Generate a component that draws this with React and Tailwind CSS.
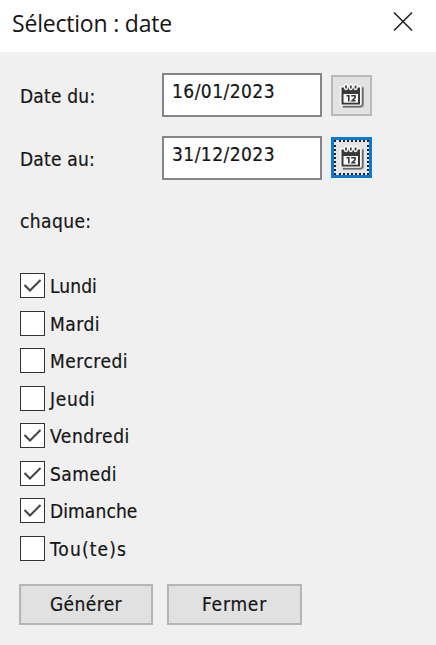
import React from "react";

const days = [
  { label: "Lundi", checked: true, tracking: "tracking-[0.1px]" },
  { label: "Mardi", checked: false, tracking: "tracking-[0.5px]" },
  { label: "Mercredi", checked: false, tracking: "tracking-[0.5px]" },
  { label: "Jeudi", checked: false, tracking: "tracking-[0.7px]" },
  { label: "Vendredi", checked: true, tracking: "tracking-[0.6px]" },
  { label: "Samedi", checked: true, tracking: "tracking-[0.5px]" },
  { label: "Dimanche", checked: true, tracking: "tracking-[0.1px]" },
  { label: "Tou(te)s", checked: false, tracking: "tracking-[1.15px]" },
];

function CalendarIcon() {
  return (
    <svg width="26" height="26" viewBox="0 0 26 26" fill="none">
      <path d="M22 3.5h3V24.500H3.500v-3" fill="#bdbdbd" />
      <path d="M23.700 4.500v17.300l-2 2H4" stroke="#666" strokeWidth="1.600" />
      <rect x="1" y="3" width="21.500" height="19.500" rx="1" fill="#f8f8f8" />
      <path d="M2.500 4.500h18.500v17H2.500z" fill="#383838" />
      <path d="M4.500 11h14.500v8.700H4.500z" fill="#fafafa" />
      <g fill="#f8f8f8">
        <ellipse cx="7" cy="3.800" rx="2.300" ry="3.400" />
        <ellipse cx="11.800" cy="3.800" rx="2.300" ry="3.400" />
        <ellipse cx="16.600" cy="3.800" rx="2.300" ry="3.400" />
      </g>
      <path d="M7 2.500v3M11.800 2.500v3M16.600 2.500v3" stroke="#444" strokeWidth="1.800" />
      <path d="M7.500 12.800h2.300v5.700M12.200 12.800h3.800v2l-2.800 3h3.300" stroke="#383838" strokeWidth="1.600" />
    </svg>
  );
}

function DateRow({ label, value, focused }) {
  return (
    <div className="flex h-[63px] items-start">
      <label className="w-[142px] pt-[9px] leading-7 tracking-[0.2px]">{label}</label>
      <div className="h-[44px] w-[160px] border-2 border-[#858585] bg-white pt-[2px] pl-[8px] leading-7 tracking-[0.45px]">
        {value}
      </div>
      {focused ? (
        <button className="mt-px ml-[9px] h-[41px] w-[41px] bg-[#0b78d7] p-[3px]">
          <span className="flex h-full w-full items-center justify-center border-2 border-dotted border-[#222] bg-[#e5e5e5]">
            <CalendarIcon />
          </span>
        </button>
      ) : (
        <button className="mt-[2px] ml-[9px] flex h-[41px] w-[41px] items-center justify-center border-2 border-[#b9b9b9] bg-[#e2e2e2]">
          <CalendarIcon />
        </button>
      )}
    </div>
  );
}

export default function App() {
  return (
    <div className="flex h-[645px] w-[436px] flex-col bg-[#f0f0f0] font-['DejaVu_Sans_Condensed','DejaVu_Sans',sans-serif] text-[19px] text-[#151515] [-webkit-text-stroke:0.2px_#151515]">
      <header className="flex h-[52px] shrink-0 items-start justify-between bg-white pr-[23px] pl-[12px] font-['Open_Sans',sans-serif]">
        <h1 className="pt-[7px] text-[23px] leading-8 tracking-[-0.2px] whitespace-nowrap [-webkit-text-stroke:0]">Sélection : date</h1>
        <svg className="mt-[11px]" width="20" height="21" viewBox="0 0 20 21" fill="none">
          <path d="M1 1.500l18 18M19 1.500l-18 18" stroke="#222" strokeWidth="1.600" />
        </svg>
      </header>
      <main className="flex flex-col px-[20px] pt-[21px]">
        <DateRow label="Date du:" value="16/01/2023" />
        <DateRow label="Date au:" value="31/12/2023" focused />
        <p className="h-[68px] pt-[8px] leading-7 tracking-[0.4px]">chaque:</p>
        <div className="flex flex-col">
          {days.map((day) => (
            <label key={day.label} className="flex h-[37.5px] items-center gap-[5px]">
              <span className="flex h-[25px] w-[25px] items-center justify-center border-[1.500px] border-[#333] bg-white">
                {day.checked && (
                  <svg width="19" height="15" viewBox="0 0 19 15" fill="none">
                    <path d="M1.500 7l5.500 5.500L17.500 2" stroke="#444" strokeWidth="2.100" />
                  </svg>
                )}
              </span>
              <span className={`pt-px leading-7 ${day.tracking}`}>{day.label}</span>
            </label>
          ))}
        </div>
        <div className="-ml-px flex gap-[14px] pt-[17px]">
          <button className="h-[41px] w-[134px] border-2 border-[#b5b5b5] bg-[#e1e1e1] tracking-[0.4px]">Générer</button>
          <button className="h-[41px] w-[135px] border-2 border-[#b5b5b5] bg-[#e1e1e1] tracking-[0.8px]">Fermer</button>
        </div>
      </main>
    </div>
  );
}
